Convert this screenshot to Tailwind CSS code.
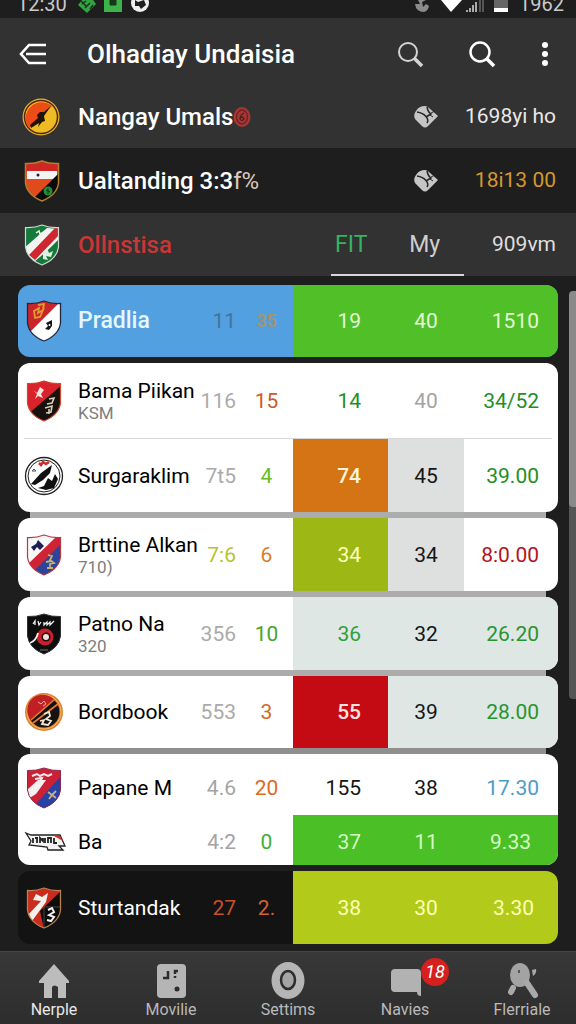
<!DOCTYPE html>
<html lang="en">
<head>
<meta charset="utf-8">
<meta name="viewport" content="width=device-width, initial-scale=1">
<title>Olhadiay Undaisia</title>
<script src="https://cdn.jsdelivr.net/npm/@tailwindcss/browser@4"></script>
</head>
<body class="flex min-h-screen flex-col bg-[#1e1e1e] font-[Roboto,'Liberation_Sans',sans-serif] text-white">

<!-- Shared shapes -->
<svg class="absolute h-0 w-0" aria-hidden="true">
  <defs>
    <path id="shield" d="M1.500 3.500Q10 4 18 1Q26 4 34.500 3.500V23Q33 35 18 41Q3 35 1.500 23Z"/>
    <clipPath id="clip"><use href="#shield"/></clipPath>
    <g id="gem">
      <path d="M12 2Q6 2 3 7Q0 11 2 15L9 22Q12 25 15 22L25 12L16 4Q14 2 12 2Z" fill="#c6c6c6"/>
      <path d="M4 8Q10 9 13 12.500Q16 16 14 19M14 3Q15 8 18 10L13 13" fill="none" stroke="#262626" stroke-width="1.500"/>
      <path d="M18 9L22 7M17 11L20 13" stroke="#262626" stroke-width="1"/>
    </g>
  </defs>
</svg>

<!-- Status bar -->
<div class="flex h-[18px] items-end overflow-hidden bg-[#1e1e1e] pr-3 pl-[17px] text-xl leading-6 text-[#c9c9c9]">
  <span class="w-[61px] -translate-y-1 leading-none">12:30</span>
  <svg class="h-[18px] w-[74px]" viewBox="0 0 74 18" aria-hidden="true">
    <path d="M0 5L4 0H15L18 4L9 13Z" fill="#35a045"/><path d="M4 4L8 1M7 8L12 3M12 9L15 5M3 1L8 6" stroke="#16351b" stroke-width="1.500"/>
    <path d="M26 0H44V12H26Z" fill="#3db347"/><path d="M32 0V5H38V0M34 1V3" fill="#17381b" stroke="#17381b"/>
    <circle cx="62" cy="3" r="9" fill="#eee"/><path d="M57 0L60 2L66 0L68 5L63 9L61 6L57 6Z" fill="#1e1e1e"/>
  </svg>
  <span class="grow"></span>
  <svg class="h-[18px] w-24 shrink-0" viewBox="0 0 96 18" aria-hidden="true">
    <path d="M0 4Q1 12 9 12Q13 11 14 6L11 4L8 7L7 2L11 0H3L5 4Z" fill="#8b8b8b"/>
    <path d="M26 0H47L36 12Z" fill="#fff"/>
    <path d="M52 12V10M55 12V8M58 12V5M61 12V2" stroke="#aaa" stroke-width="2"/><path d="M65 12V0M68 12V0" stroke="#555" stroke-width="2"/>
    <path d="M79 0H93V12H79Z" fill="#666"/><path d="M79 8H93V12H79Z" fill="#fff"/>
  </svg>
  <span class="-translate-y-1 pl-2 leading-none">1962</span>
</div>

<!-- App bar and summary rows -->
<header class="bg-[#323232]">
  <div class="flex h-[68px] items-center pt-1 pr-4 pl-[18px]">
    <button type="button" aria-label="Back" class="w-[69px] shrink-0">
      <svg class="h-6 w-8" viewBox="0 0 32 24" fill="none" stroke="#fff" stroke-width="2.600" aria-hidden="true"><path d="M28 3H11L3 12L11 21H28M8 12H28"/></svg>
    </button>
    <h1 class="grow text-[26px] font-medium whitespace-nowrap">Olhadiay Undaisia</h1>
    <button type="button" aria-label="Find" class="mr-11 shrink-0">
      <svg class="h-7 w-7" viewBox="0 0 28 28" fill="none" stroke="#d4d4d4" aria-hidden="true"><circle cx="12" cy="12" r="9" stroke-width="2"/><path d="M18 18L26 26" stroke-width="3.500"/></svg>
    </button>
    <button type="button" aria-label="Search" class="mr-[34px] shrink-0">
      <svg class="h-7 w-7" viewBox="0 0 28 28" fill="none" stroke="#fff" aria-hidden="true"><circle cx="12" cy="12" r="9.500" stroke-width="2.500"/><path d="M18 18L26 26" stroke-width="3.500"/></svg>
    </button>
    <button type="button" aria-label="More options" class="flex w-[30px] shrink-0 flex-col items-center gap-[3px]">
      <span class="h-1.5 w-1.5 rounded-full bg-white"></span><span class="h-1.5 w-1.5 rounded-full bg-white"></span><span class="h-1.5 w-1.5 rounded-full bg-white"></span>
    </button>
  </div>

  <div class="grid h-[62px] grid-cols-[minmax(0,1fr)_66px_67px_112px] items-center">
    <div class="col-span-2 flex items-center gap-4 pl-[22px]">
      <svg class="h-10 w-10" viewBox="0 0 40 40" aria-hidden="true"><circle cx="19" cy="20" r="18.500" fill="#e9b52f"/><circle cx="19" cy="20" r="16.500" fill="#eebc22" stroke="#51270d" stroke-width="1.500"/><path d="M7 31A16 16 0 0 1 30 9Z" fill="#ee4c17"/><path d="M29 9L22 15L18 15L15 18L16 21L8 28L9 31L17 26L16 30L20 25L23 24L22 19Z" fill="#221209"/></svg>
      <p class="flex items-center text-2xl font-medium whitespace-nowrap">Nangay Umals
        <svg class="h-5 w-[18px]" viewBox="0 0 18 20" aria-hidden="true"><ellipse cx="9" cy="10" rx="8.500" ry="10" fill="#a93535"/><ellipse cx="9" cy="10" rx="5.500" ry="7" fill="none" stroke="#6a2323" stroke-width="1.300"/><path d="M11 6Q7 8 7 12Q9 15 11 12Q10 9 7 11" fill="none" stroke="#45201f" stroke-width="1.300"/></svg>
      </p>
    </div>
    <svg class="ml-4 h-[26px] w-[26px]" viewBox="0 0 26 26" role="img" aria-label="Team"><use href="#gem"/></svg>
    <span class="pr-5 text-right text-[21px] whitespace-nowrap text-[#e8e8e8]">1698yi ho</span>
  </div>

  <div class="grid h-[65px] grid-cols-[minmax(0,1fr)_66px_67px_112px] items-center bg-[#1e1e1e]">
    <div class="col-span-2 flex items-center gap-4 pl-[22px]">
      <svg class="h-[42px] w-10" viewBox="-1 0 38 42" aria-hidden="true"><g clip-path="url(#clip)"><path d="M0 0H36V42H0Z" fill="#df4b1c"/><path d="M0 0H36V12H0Z" fill="#cf2724"/><path d="M3 11H33V19H3Z" fill="#f4f4f4"/><path d="M36 12L6 42H36Z" fill="#0a0a0a"/><circle cx="24" cy="31" r="4.500" fill="#268c3c"/><path d="M22 30L26 32M24 28V34" stroke="#0c3a16"/><circle cx="14" cy="15" r="1.500" fill="#222"/></g><use href="#shield" fill="none" stroke="#b08030" stroke-width="1.500"/></svg>
      <p class="text-2xl font-medium whitespace-nowrap">Ualtanding 3:3<span class="font-normal text-[#d9c8c0]">f%</span></p>
    </div>
    <svg class="ml-4 h-[26px] w-[26px]" viewBox="0 0 26 26" role="img" aria-label="Team"><use href="#gem"/></svg>
    <span class="pr-5 text-right text-[21px] whitespace-nowrap text-[#d5982f]">18i13 00</span>
  </div>

  <div class="grid h-[63px] grid-cols-[minmax(0,1fr)_66px_67px_112px] items-center">
    <div class="flex items-center gap-4 pl-[22px]">
      <svg class="h-[42px] w-10" viewBox="-1 0 38 42" aria-hidden="true"><g clip-path="url(#clip)"><path d="M0 0H36V42H0Z" fill="#15793b"/><path d="M0 24L23 4L36 5V16L10 38L0 34Z" fill="#f3f3f3"/><path d="M5 31L31 4H36V10L11 36Z" fill="#cf2630"/><path d="M36 14V30L20 40L16 34Z" fill="#15793b"/><path d="M19 28L23 24L25 29L29 27L27 33L22 32L24 36L19 35Z" fill="#dff0df"/><path d="M12 9L15 7L16 10L20 8" stroke="#e9f5e9" stroke-width="1.500" fill="none"/></g><use href="#shield" fill="none" stroke="#cfd8cf" stroke-width="1.200"/></svg>
      <p class="text-2xl font-medium whitespace-nowrap text-[#c93636]">Ollnstisa</p>
    </div>
    <div role="tablist" class="col-span-2 grid h-full grid-cols-2 border-b-2 border-[#d6d6d6] pt-1 text-[23px]">
      <button type="button" role="tab" aria-selected="true" class="pl-1 text-left text-[#35b45f]">FIT</button>
      <button type="button" role="tab" aria-selected="false" class="pr-3 text-center text-[#cfcfcf]">My</button>
    </div>
    <span class="pr-5 text-right text-[21px] whitespace-nowrap text-[#dedede]">909vm</span>
  </div>
</header>

<main class="relative grow px-[18px] pt-[9px] pb-[7px]">
  <table class="flex flex-col text-[21px] leading-6">
    <tbody class="block overflow-hidden rounded-xl bg-[#53a0e0] text-[#e3f8d4]">
      <tr class="grid h-[72px] grid-cols-[minmax(0,1fr)_36px_57px_95px_76px_94px]">
        <th scope="row" class="flex items-center gap-4 pl-2 text-left text-[23px] font-medium whitespace-nowrap text-[#e6f8ff]">
          <svg class="h-[42px] w-9 shrink-0" viewBox="0 0 36 42" aria-hidden="true"><g clip-path="url(#clip)"><path d="M0 0H36V42H0Z" fill="#fff"/><path d="M0 0H36L0 36Z" fill="#c9252b"/><path d="M8 11L13 8L12 13L17 10L14 17L9 18ZM12 5L18 4L17 9" fill="none" stroke="#e39a32" stroke-width="1.800"/><path d="M20 23L26 20V26L23 30L19 29L22 26Z" fill="#151515"/><circle cx="23.500" cy="25" r="1" fill="#fff"/></g><use href="#shield" fill="none" stroke="#22263c" stroke-width="1.300"/></svg>
          Pradlia</th>
        <td class="flex items-center justify-end text-[#41749c]">11</td>
        <td class="flex items-center justify-center pl-1 text-lg font-bold text-[#a3936f]">35</td>
        <td class="flex items-center justify-end bg-[#51c028] pr-[27px]">19</td>
        <td class="flex items-center justify-center bg-[#51c028]">40</td>
        <td class="flex items-center justify-end bg-[#51c028] pr-[19px]">1510</td>
      </tr>
    </tbody>

    <tbody class="mt-1.5 block overflow-hidden rounded-xl bg-white">
      <tr class="relative grid h-[76px] grid-cols-[minmax(0,1fr)_36px_57px_95px_76px_94px] after:absolute after:inset-x-1.5 after:bottom-0 after:border-b after:border-[#d8d8d8]">
        <th scope="row" class="flex items-center gap-4 pl-2 text-left font-normal whitespace-nowrap text-black">
          <svg class="h-[42px] w-9 shrink-0" viewBox="0 0 36 42" aria-hidden="true"><g clip-path="url(#clip)"><path d="M0 0H36V42H0Z" fill="#17110f"/><path d="M0 0H36V5L1 35Z" fill="#d9232c"/><path d="M7 10L11 13L14 7L18 10L15 14L17 18L12 16L9 19L11 14Z" fill="#f6e4e0"/><path d="M23 19L28 18L26 23L21 24M19 28L26 26L25 32L20 33M23 29V34" fill="none" stroke="#d8cfb8" stroke-width="1.600"/></g><use href="#shield" fill="none" stroke="#d4472f" stroke-width="1.200"/></svg>
          <span><span class="block">Bama Piikan</span><span class="block text-[17px] leading-5 text-[#7d7d7d]">KSM</span></span></th>
        <td class="flex items-center justify-end text-[#aaa]">116</td>
        <td class="flex items-center justify-center pl-1 text-[#cf5a1e]">15</td>
        <td class="flex items-center justify-end pr-[27px] text-[#238f23]">14</td>
        <td class="flex items-center justify-center text-[#a3a3a3]">40</td>
        <td class="flex items-center justify-end pr-[19px] text-[#238f23]">34/52</td>
      </tr>
      <tr class="grid h-[73px] grid-cols-[minmax(0,1fr)_36px_57px_95px_76px_94px]">
        <th scope="row" class="flex items-center gap-4 pl-2 text-left font-normal whitespace-nowrap text-black">
          <svg class="h-10 w-9 shrink-0 overflow-visible" viewBox="0 0 36 40" aria-hidden="true"><circle cx="18" cy="20" r="18.500" fill="#fff" stroke="#222" stroke-width="1.300"/><circle cx="18" cy="20" r="16" fill="none" stroke="#222"/><path d="M5 28L15 17L26 9L24 17L17 24L9 29ZM22 22L26 25L29 18L32 23L28 32L20 34L12 32L18 30L20 26Z" fill="#101010"/><path d="M13 7L15 9L17 6L20 8L23 6" stroke="#d42a2a" stroke-width="2.500" fill="none"/><path d="M6 15L8 13L10 15Z" stroke="#555" fill="none"/></svg>
          Surgaraklim</th>
        <td class="flex items-center justify-end text-[#aaa]">7t5</td>
        <td class="flex items-center justify-center pl-1 text-[#6cba28]">4</td>
        <td class="flex items-center justify-end bg-[#d57414] pr-[27px] font-medium text-[#fff4d8]">74</td>
        <td class="flex items-center justify-center bg-[#dedfdf] text-[#161616]">45</td>
        <td class="flex items-center justify-end pr-[19px] text-[#238f23]">39.00</td>
      </tr>
    </tbody>

    <tbody aria-hidden="true" class="mx-3 block h-1.5 bg-[#acacac]"></tbody>
    <tbody class="block overflow-hidden rounded-xl bg-white">
      <tr class="grid h-[73px] grid-cols-[minmax(0,1fr)_36px_57px_95px_76px_94px]">
        <th scope="row" class="flex items-center gap-4 pl-2 text-left font-normal whitespace-nowrap text-black">
          <svg class="h-[42px] w-9 shrink-0" viewBox="0 0 36 42" aria-hidden="true"><g clip-path="url(#clip)"><path d="M0 0H36V42H0Z" fill="#f7f7f7"/><path d="M0 32L29 4H36V12L7 39Z" fill="#cf2435"/><path d="M36 9L9 36L18 42H36Z" fill="#2b449c"/><path d="M5 13L10 10L12 6L15 9L18 12L14 16L11 13L8 17Z" fill="#1e1d55"/><path d="M22 21L26 22L24 26L28 29L24 30V35M20 28L25 27M21 34H27" stroke="#c6b26a" stroke-width="1.800" fill="none"/></g><use href="#shield" fill="none" stroke="#b93645" stroke-width="1.200"/></svg>
          <span><span class="block">Brttine Alkan</span><span class="block text-[17px] leading-5 text-[#7d7d7d]">710)</span></span></th>
        <td class="flex items-center justify-end text-[#b5c42c]">7:6</td>
        <td class="flex items-center justify-center pl-1 text-[#dd7a24]">6</td>
        <td class="flex items-center justify-end bg-[#9db814] pr-[27px] text-[#fdffc0]">34</td>
        <td class="flex items-center justify-center bg-[#dedfdf] text-[#161616]">34</td>
        <td class="flex items-center justify-end pr-[19px] text-[#b3141b]">8:0.00</td>
      </tr>
    </tbody>

    <tbody aria-hidden="true" class="mx-3 block h-1.5 bg-[#acacac]"></tbody>
    <tbody class="block overflow-hidden rounded-xl bg-white">
      <tr class="grid h-[73px] grid-cols-[minmax(0,1fr)_36px_57px_95px_76px_94px]">
        <th scope="row" class="flex items-center gap-4 pl-2 text-left font-normal whitespace-nowrap text-black">
          <svg class="h-[42px] w-9 shrink-0" viewBox="0 0 36 42" aria-hidden="true"><use href="#shield" fill="#0d0d0d" stroke="#333"/><path d="M7 11L9 8V12M12 8L13 12L15 9M18 9V12L21 9V12L24 9V12L28 8" stroke="#eee" stroke-width="1.300" fill="none"/><circle cx="19" cy="24" r="8.500" fill="#c9202b"/><circle cx="20" cy="24" r="4.500" fill="#1c0d0d"/><circle cx="20" cy="24" r="3" fill="#f2dede"/><path d="M4 30Q10 28 12 20" stroke="#eee" stroke-width="1.800" fill="none"/><path d="M14 37H22" stroke="#777"/></svg>
          <span><span class="block">Patno Na</span><span class="block text-[17px] leading-5 text-[#7d7d7d]">320</span></span></th>
        <td class="flex items-center justify-end text-[#aaa]">356</td>
        <td class="flex items-center justify-center pl-1 text-[#43a52b]">10</td>
        <td class="flex items-center justify-end bg-[#dfe7e5] pr-[27px] text-[#2ea03a]">36</td>
        <td class="flex items-center justify-center bg-[#dfe7e5] text-[#161616]">32</td>
        <td class="flex items-center justify-end bg-[#dfe7e5] pr-[19px] text-[#27952f]">26.20</td>
      </tr>
    </tbody>

    <tbody aria-hidden="true" class="mx-3 block h-1.5 bg-[#acacac]"></tbody>
    <tbody class="block overflow-hidden rounded-xl bg-white">
      <tr class="grid h-[72px] grid-cols-[minmax(0,1fr)_36px_57px_95px_76px_94px]">
        <th scope="row" class="flex items-center gap-4 pl-2 text-left font-normal whitespace-nowrap text-black">
          <svg class="h-10 w-9 shrink-0 overflow-visible" viewBox="0 0 36 40" aria-hidden="true"><circle cx="18" cy="20" r="19" fill="#dd8130"/><circle cx="18" cy="20" r="17" fill="none" stroke="#f3bc68"/><circle cx="18" cy="20" r="15.500" fill="#17110f"/><path d="M5 28A15 15 0 0 1 28 8Z" fill="#c02023"/><path d="M5 28L28 8M7 31L32 12" stroke="#e57b2c" stroke-width="1.600"/><path d="M12 10L15 12L18 9L20 12L17 14" stroke="#efaf9a" fill="none"/><path d="M18 22L23 20L24 24L20 27L25 29L22 33L16 32L18 28L14 29" stroke="#f0e6da" stroke-width="1.800" fill="none"/></svg>
          Bordbook</th>
        <td class="flex items-center justify-end text-[#aaa]">553</td>
        <td class="flex items-center justify-center pl-1 text-[#cf6a20]">3</td>
        <td class="flex items-center justify-end bg-[#c40a12] pr-[27px] font-medium text-[#ffe3e0]">55</td>
        <td class="flex items-center justify-center bg-[#dfe7e5] text-[#161616]">39</td>
        <td class="flex items-center justify-end bg-[#dfe7e5] pr-[19px] text-[#27952f]">28.00</td>
      </tr>
    </tbody>

    <tbody aria-hidden="true" class="mx-3 block h-1.5 bg-[#8f8f8f]"></tbody>
    <tbody class="block overflow-hidden rounded-xl bg-white">
      <tr class="grid h-[61px] grid-cols-[minmax(0,1fr)_36px_57px_95px_76px_94px] pt-1.5">
        <th scope="row" class="flex items-center gap-4 pl-2 text-left font-normal whitespace-nowrap text-black">
          <svg class="h-[42px] w-9 shrink-0" viewBox="0 0 36 42" aria-hidden="true"><g clip-path="url(#clip)"><path d="M0 0H36V42H0Z" fill="#cb2036"/><path d="M36 8L10 37L18 42H36Z" fill="#2443a4"/><path d="M2 32V22L12 13H20L10 27Z" fill="#f4f0f2"/><path d="M6 9L11 7L14 9L18 7L22 9L26 7M9 12L16 11L13 17" stroke="#f7e8ea" stroke-width="2" fill="none"/><path d="M22 25L26 28L30 24M26 28L23 32M26 28L30 31" stroke="#c9ad8a" stroke-width="1.800" fill="none"/></g><use href="#shield" fill="none" stroke="#8d2851"/></svg>
          Papane M</th>
        <td class="flex items-center justify-end text-[#a3a3a3]">4.6</td>
        <td class="flex items-center justify-center pl-1 text-[#dc6a1f]">20</td>
        <td class="flex items-center justify-end pr-[27px] text-[#161616]">155</td>
        <td class="flex items-center justify-center text-[#161616]">38</td>
        <td class="flex items-center justify-end pr-[19px] text-[#4b9cc7]">17.30</td>
      </tr>
      <tr class="grid h-[50px] grid-cols-[minmax(0,1fr)_36px_57px_95px_76px_94px] text-[#d5fbc4]">
        <th scope="row" class="flex items-center gap-4 pt-1 pl-2 text-left font-normal whitespace-nowrap text-black">
          <svg class="h-5 w-9 shrink-0 overflow-visible" viewBox="0 0 36 20" aria-hidden="true"><path d="M0 1L5 3H34L39 14H33L37 18H22L21 15L3 13L5 9Z" fill="#f3f3f3" stroke="#222" stroke-width="1.300"/><path d="M28 4H34L37 9Z" fill="#d7332e"/><path d="M7 6V11M9 6H12M11 6V11M14 11V6L17 9V6M19 6V11M22 11V6H25V11M28 6V11H31" stroke="#222" stroke-width="1.800" fill="none"/></svg>
          Ba</th>
        <td class="flex items-center justify-end pt-1 text-[#a3a3a3]">4:2</td>
        <td class="flex items-center justify-center pt-1 pl-1 text-[#3fae35]">0</td>
        <td class="flex items-center justify-end bg-[#4abf26] pt-1 pr-[27px]">37</td>
        <td class="flex items-center justify-center bg-[#4abf26] pt-1">11</td>
        <td class="flex items-center justify-end bg-[#4abf26] pt-1 pr-[27px]">9.33</td>
      </tr>
    </tbody>

    <tbody class="mt-1.5 block overflow-hidden rounded-xl bg-[#131313]">
      <tr class="grid h-[73px] grid-cols-[minmax(0,1fr)_36px_57px_95px_76px_94px] text-[#fbffb5]">
        <th scope="row" class="flex items-center gap-4 pl-2 text-left font-normal whitespace-nowrap text-white">
          <svg class="h-[42px] w-9 shrink-0" viewBox="0 0 36 42" aria-hidden="true"><g clip-path="url(#clip)"><path d="M0 0H36V42H0Z" fill="#c92c1e"/><path d="M36 3L14 24L18 42H36Z" fill="#0d0d0d"/><path d="M2 28L15 14L7 13L10 7L16 10L22 6L20 15L6 34Z" fill="#f6f0ed"/><path d="M18 20H36M18 20V42" stroke="#555" stroke-width=".8"/><path d="M22 23L26 21L28 25L23 28L28 30L25 34L21 33" stroke="#f0f0f0" stroke-width="2" fill="none"/></g><use href="#shield" fill="none" stroke="#b9824d" stroke-width="1.300"/></svg>
          Sturtandak</th>
        <td class="flex items-center justify-end text-[#c8502a]">27</td>
        <td class="flex items-center justify-center pl-1 text-[#d2622a]">2.</td>
        <td class="flex items-center justify-end bg-[#b2ca1a] pr-[27px]">38</td>
        <td class="flex items-center justify-center bg-[#b2ca1a]">30</td>
        <td class="flex items-center justify-end bg-[#b2ca1a] pr-6">3.30</td>
      </tr>
    </tbody>
  </table>

  <!-- Scroll indicator over the list edge -->
  <div aria-hidden="true" class="absolute top-[15px] right-0 h-[408px] w-[7px] overflow-hidden rounded-l bg-[#555]">
    <div class="h-[216px] rounded-l bg-[#8a8a8a]"></div>
  </div>
</main>

<nav class="flex h-[73px] items-start justify-between border-t border-[#444] bg-linear-to-b from-[#383838] to-[#2d2d2d] px-3.5 pt-2 text-base leading-5 text-[#b9b9b9]">
  <a href="#nerple" class="flex w-20 flex-col items-center text-[#e8e8e8]">
    <svg class="h-10 w-10" viewBox="0 0 40 40" fill="#bcbcbc" aria-hidden="true"><path d="M20 4L35 21V23H32V38H24V27Q20 24 18 27V38H10V23H5V21Z"/></svg>
    <span>Nerple</span>
  </a>
  <a href="#movilie" class="flex w-20 flex-col items-center">
    <svg class="h-10 w-10" viewBox="0 0 40 40" aria-hidden="true"><rect x="6" y="4" width="29" height="34" rx="4" fill="#b5b5b5"/><path d="M12 18H17V11M24 18V16M24 14V11H27" fill="none" stroke="#2d2d2d" stroke-width="2.500"/><circle cx="26" cy="29" r="2.500" fill="#2d2d2d"/></svg>
    <span>Movilie</span>
  </a>
  <a href="#settims" class="flex w-20 flex-col items-center">
    <svg class="h-10 w-10" viewBox="0 0 40 40" aria-hidden="true"><ellipse cx="20" cy="20.500" rx="16.500" ry="18.500" fill="#b5b5b5"/><ellipse cx="20" cy="20" rx="7" ry="9" fill="#a5a5a5" stroke="#2d2d2d" stroke-width="2.500"/></svg>
    <span>Settims</span>
  </a>
  <a href="#navies" class="relative flex w-20 flex-col items-center">
    <svg class="h-10 w-10" viewBox="0 0 40 40" aria-hidden="true"><path d="M10 9H32Q36 9 36 13V36Q32 36 32 32H10Q6 32 6 28V13Q6 9 10 9Z" fill="#b2b2b2"/></svg>
    <span>Navies</span>
    <span class="absolute -top-0.5 right-[-4px] flex h-7 w-7 items-center justify-center rounded-full bg-[#d5201f] text-lg text-white italic">18</span>
  </a>
  <a href="#flerriale" class="flex w-20 flex-col items-center">
    <svg class="h-10 w-10" viewBox="0 0 40 40" aria-hidden="true"><ellipse cx="18" cy="15" rx="10" ry="12" fill="#a3a3a3"/><path d="M25 23L33 35M11 28L9 32" stroke="#a9a9a9" stroke-width="6" stroke-linecap="round"/><path d="M30 10L34 9Q35 13 31 16Z" fill="#a9a9a9"/><path d="M17 10V13" stroke="#555" stroke-width="2"/></svg>
    <span>Flerriale</span>
  </a>
</nav>
</body>
</html>
